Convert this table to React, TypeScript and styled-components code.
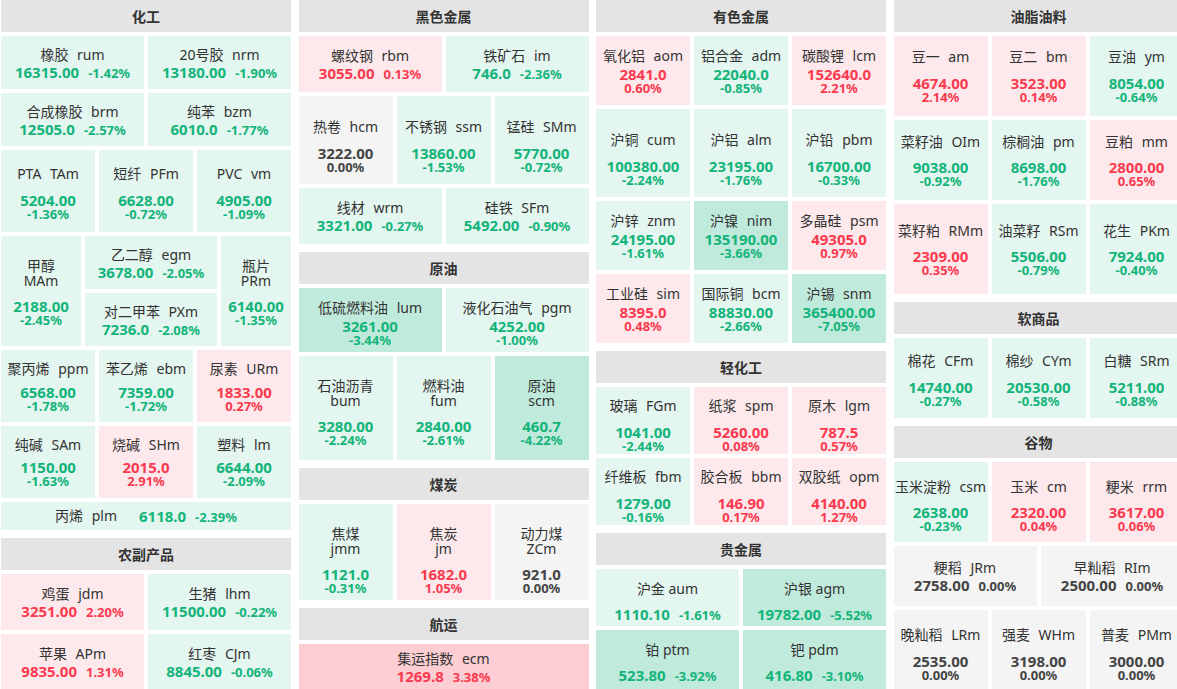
import React from 'react';
import styled, { createGlobalStyle } from 'styled-components';

const GlobalStyle = createGlobalStyle`
  html, body { margin: 0; padding: 0; background: #fff; overflow: hidden; }
  body { font-family: "Noto Sans", "Noto Sans CJK SC", sans-serif; color: #333; }
`;

type Variant = 'inline' | 'loose' | 'stack' | 'split' | 'single';
type Q = [string, string, string, string];

interface CellDef { v: Variant; gap?: number; pt?: number; q: Q }
interface SlotDef { w?: number; cells: CellDef[] }
interface RowDef { h: number; slots: SlotDef[] }
interface SectionDef { title: string; rows: RowDef[] }

const row = (h: number, v: Variant, items: Q[], gap = 0, pt = 0): RowDef => ({
  h,
  slots: items.map((q) => ({ cells: [{ v, gap, pt, q }] })),
});

const tone = (pct: string) => {
  const n = parseFloat(pct);
  if (n === 0) return '#f4f4f4';
  if (n < 0) return n <= -3 ? '#c0eadb' : '#e3f6ef';
  return n >= 3 ? '#fccdd2' : '#fde9ec';
};
const ink = (pct: string) => {
  const n = parseFloat(pct);
  if (n === 0) return '#444444';
  return n < 0 ? '#13b47a' : '#fa3a4f';
};

const columns: SectionDef[][] = [
  [
    {
      title: '化工',
      rows: [
        row(53, 'inline', [['橡胶', 'rum', '16315.00', '-1.42%'], ['20号胶', 'nrm', '13180.00', '-1.90%']]),
        row(53, 'inline', [['合成橡胶', 'brm', '12505.0', '-2.57%'], ['纯苯', 'bzm', '6010.0', '-1.77%']]),
        row(82, 'stack', [['PTA', 'TAm', '5204.00', '-1.36%'], ['短纤', 'PFm', '6628.00', '-0.72%'], ['PVC', 'vm', '4905.00', '-1.09%']], 9, 4),
        {
          h: 110,
          slots: [
            { w: 80, cells: [{ v: 'split', gap: 10, pt: 4, q: ['甲醇', 'MAm', '2188.00', '-2.45%'] }] },
            {
              w: 132,
              cells: [
                { v: 'inline', q: ['乙二醇', 'egm', '3678.00', '-2.05%'] },
                { v: 'inline', q: ['对二甲苯', 'PXm', '7236.0', '-2.08%'] },
              ],
            },
            { cells: [{ v: 'split', gap: 10, pt: 4, q: ['瓶片', 'PRm', '6140.00', '-1.35%'] }] },
          ],
        },
        row(72, 'stack', [['聚丙烯', 'ppm', '6568.00', '-1.78%'], ['苯乙烯', 'ebm', '7359.00', '-1.72%'], ['尿素', 'URm', '1833.00', '0.27%']], 6),
        row(72, 'stack', [['纯碱', 'SAm', '1150.00', '-1.63%'], ['烧碱', 'SHm', '2015.0', '2.91%'], ['塑料', 'lm', '6644.00', '-2.09%']], 5),
        row(28, 'single', [['丙烯', 'plm', '6118.0', '-2.39%']]),
      ],
    },
    {
      title: '农副产品',
      rows: [
        row(56, 'inline', [['鸡蛋', 'jdm', '3251.00', '2.20%'], ['生猪', 'lhm', '11500.00', '-0.22%']]),
        row(56, 'inline', [['苹果', 'APm', '9835.00', '1.31%'], ['红枣', 'CJm', '8845.00', '-0.06%']]),
      ],
    },
  ],
  [
    {
      title: '黑色金属',
      rows: [
        row(56, 'inline', [['螺纹钢', 'rbm', '3055.00', '0.13%'], ['铁矿石', 'im', '746.0', '-2.36%']]),
        row(88, 'stack', [['热卷', 'hcm', '3222.00', '0.00%'], ['不锈钢', 'ssm', '13860.00', '-1.53%'], ['锰硅', 'SMm', '5770.00', '-0.72%']], 9, 12),
        row(56, 'inline', [['线材', 'wrm', '3321.00', '-0.27%'], ['硅铁', 'SFm', '5492.00', '-0.90%']]),
      ],
    },
    {
      title: '原油',
      rows: [
        row(64, 'stack', [['低硫燃料油', 'lum', '3261.00', '-3.44%'], ['液化石油气', 'pgm', '4252.00', '-1.00%']], 1, 5),
        row(104, 'split', [['石油沥青', 'bum', '3280.00', '-2.24%'], ['燃料油', 'fum', '2840.00', '-2.61%'], ['原油', 'scm', '460.7', '-4.22%']], 10, 10),
      ],
    },
    {
      title: '煤炭',
      rows: [
        row(96, 'split', [['焦煤', 'jmm', '1121.0', '-0.31%'], ['焦炭', 'jm', '1682.0', '1.05%'], ['动力煤', 'ZCm', '921.0', '0.00%']], 10, 18),
      ],
    },
    {
      title: '航运',
      rows: [row(46, 'inline', [['集运指数', 'ecm', '1269.8', '3.38%']])],
    },
  ],
  [
    {
      title: '有色金属',
      rows: [
        row(69, 'stack', [['氧化铝', 'aom', '2841.0', '0.60%'], ['铝合金', 'adm', '22040.0', '-0.85%'], ['碳酸锂', 'lcm', '152640.0', '2.21%']], 1),
        row(88, 'stack', [['沪铜', 'cum', '100380.00', '-2.24%'], ['沪铝', 'alm', '23195.00', '-1.76%'], ['沪铅', 'pbm', '16700.00', '-0.33%']], 9, 12),
        row(69, 'stack', [['沪锌', 'znm', '24195.00', '-1.61%'], ['沪镍', 'nim', '135190.00', '-3.66%'], ['多晶硅', 'psm', '49305.0', '0.97%']], 1),
        row(69, 'stack', [['工业硅', 'sim', '8395.0', '0.48%'], ['国际铜', 'bcm', '88830.00', '-2.66%'], ['沪锡', 'snm', '365400.00', '-7.05%']], 1),
      ],
    },
    {
      title: '轻化工',
      rows: [
        row(67, 'stack', [['玻璃', 'FGm', '1041.00', '-2.44%'], ['纸浆', 'spm', '5260.00', '0.08%'], ['原木', 'lgm', '787.5', '0.57%']], 9, 8),
        row(67, 'stack', [['纤维板', 'fbm', '1279.00', '-0.16%'], ['胶合板', 'bbm', '146.90', '0.17%'], ['双胶纸', 'opm', '4140.00', '1.27%']], 9, 8),
      ],
    },
    {
      title: '贵金属',
      rows: [
        row(57, 'loose', [['沪金', 'aum', '1110.10', '-1.61%'], ['沪银', 'agm', '19782.00', '-5.52%']], 8, 7),
        row(63, 'loose', [['铂', 'ptm', '523.80', '-3.92%'], ['钯', 'pdm', '416.80', '-3.10%']], 8, 0),
      ],
    },
  ],
  [
    {
      title: '油脂油料',
      rows: [
        row(80, 'stack', [['豆一', 'am', '4674.00', '2.14%'], ['豆二', 'bm', '3523.00', '0.14%'], ['豆油', 'ym', '8054.00', '-0.64%']], 9),
        row(80, 'stack', [['菜籽油', 'OIm', '9038.00', '-0.92%'], ['棕榈油', 'pm', '8698.00', '-1.76%'], ['豆粕', 'mm', '2800.00', '0.65%']], 8),
        row(90, 'stack', [['菜籽粕', 'RMm', '2309.00', '0.35%'], ['油菜籽', 'RSm', '5506.00', '-0.79%'], ['花生', 'PKm', '7924.00', '-0.40%']], 8),
      ],
    },
    {
      title: '软商品',
      rows: [
        row(80, 'stack', [['棉花', 'CFm', '14740.00', '-0.27%'], ['棉纱', 'CYm', '20530.00', '-0.58%'], ['白糖', 'SRm', '5211.00', '-0.88%']], 9, 4),
      ],
    },
    {
      title: '谷物',
      rows: [
        row(80, 'stack', [['玉米淀粉', 'csm', '2638.00', '-0.23%'], ['玉米', 'cm', '2320.00', '0.04%'], ['粳米', 'rrm', '3617.00', '0.06%']], 8, 6),
        row(60, 'inline', [['粳稻', 'JRm', '2758.00', '0.00%'], ['早籼稻', 'RIm', '2500.00', '0.00%']]),
        row(88, 'stack', [['晚籼稻', 'LRm', '2535.00', '0.00%'], ['强麦', 'WHm', '3198.00', '0.00%'], ['普麦', 'PMm', '3000.00', '0.00%']], 9),
      ],
    },
  ],
];

const Page = styled.div`
  display: grid;
  grid-template-columns: repeat(4, 290px);
  column-gap: 7.5px;
  padding-left: 1px;
  width: 1200px;
  align-items: start;
`;

const Column = styled.div`
  display: flex;
  flex-direction: column;
  gap: 8px;
`;

const Section = styled.section`
  display: flex;
  flex-direction: column;
  gap: 4px;
`;

const Header = styled.div`
  height: 32px;
  background: #e4e4e4;
  display: flex;
  align-items: center;
  justify-content: center;
  font-size: 14px;
  font-weight: 700;
  color: #333;
`;

const Row = styled.div<{ $h: number }>`
  display: flex;
  gap: 4px;
  height: ${(p) => p.$h}px;
`;

const Slot = styled.div<{ $w?: number }>`
  display: flex;
  flex-direction: column;
  gap: 4px;
  min-width: 0;
  flex: ${(p) => (p.$w ? `0 0 ${p.$w}px` : '1 1 0')};
`;

const Tile = styled.div<{ $bg: string; $pt: number; $row: boolean }>`
  flex: 1 1 0;
  min-height: 0;
  background: ${(p) => p.$bg};
  display: flex;
  flex-direction: ${(p) => (p.$row ? 'row' : 'column')};
  align-items: center;
  justify-content: center;
  padding-top: ${(p) => p.$pt}px;
  text-align: center;
  overflow: hidden;
  box-sizing: border-box;
`;

const Name = styled.div<{ $gap: number; $split: boolean }>`
  font-size: 14px;
  line-height: ${(p) => (p.$split ? '14.5px' : '18px')};
  color: #333;
  white-space: nowrap;
  margin-bottom: ${(p) => p.$gap}px;
`;

const Code = styled.span<{ $split: boolean; $space: number }>`
  display: ${(p) => (p.$split ? 'block' : 'inline')};
  margin-left: ${(p) => (p.$split ? 0 : p.$space)}px;
`;

const Figures = styled.div<{ $inline: boolean; $lead?: number }>`
  display: flex;
  flex-direction: ${(p) => (p.$inline ? 'row' : 'column')};
  align-items: ${(p) => (p.$inline ? 'baseline' : 'center')};
  gap: ${(p) => (p.$inline ? '9px' : '0')};
  margin-left: ${(p) => p.$lead ?? 0}px;
  white-space: nowrap;
`;

const Value = styled.span<{ $c: string }>`
  font-size: 15px;
  font-weight: 700;
  line-height: 16px;
  color: ${(p) => p.$c};
`;

const Pct = styled.span<{ $c: string }>`
  font-size: 13px;
  font-weight: 700;
  line-height: 13px;
  color: ${(p) => p.$c};
`;

const Cell: React.FC<{ d: CellDef }> = ({ d }) => {
  const [name, code, value, pct] = d.q;
  const split = d.v === 'split';
  const inline = d.v === 'inline' || d.v === 'loose' || d.v === 'single';
  const single = d.v === 'single';
  const c = ink(pct);
  return (
    <Tile $bg={tone(pct)} $pt={d.pt ?? 0} $row={single}>
      <Name $gap={single ? 0 : d.gap ?? 0} $split={split}>
        {name} <Code $split={split} $space={d.v === 'loose' ? 0 : 5}>{code}</Code>
      </Name>
      <Figures $inline={inline} $lead={single ? 22 : 0}>
        <Value $c={c}>{value}</Value>
        <Pct $c={c}>{pct}</Pct>
      </Figures>
    </Tile>
  );
};

export default function App() {
  return (
    <>
      <GlobalStyle />
      <Page>
        {columns.map((sections, ci) => (
          <Column key={ci}>
            {sections.map((s) => (
              <Section key={s.title}>
                <Header>{s.title}</Header>
                {s.rows.map((r, ri) => (
                  <Row key={ri} $h={r.h}>
                    {r.slots.map((sl, si) => (
                      <Slot key={si} $w={sl.w}>
                        {sl.cells.map((cd, k) => (
                          <Cell key={k} d={cd} />
                        ))}
                      </Slot>
                    ))}
                  </Row>
                ))}
              </Section>
            ))}
          </Column>
        ))}
      </Page>
    </>
  );
}
